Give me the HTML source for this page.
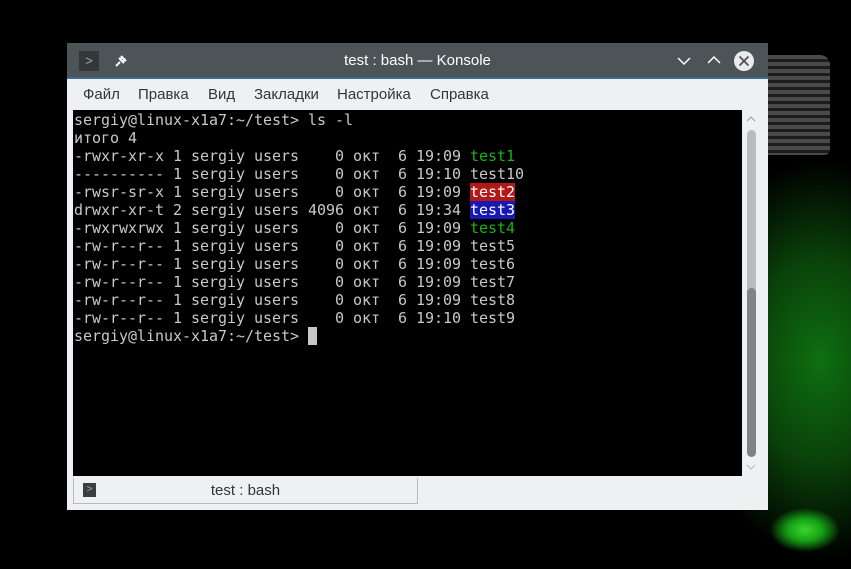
<!DOCTYPE html>
<html><head><meta charset="utf-8"><style>
*{margin:0;padding:0;box-sizing:border-box}
body{width:851px;height:569px;overflow:hidden;position:relative;background:#000;font-family:"Liberation Sans","DejaVu Sans",sans-serif}
.bg{position:absolute;inset:0;background:
radial-gradient(ellipse 35px 22px at 805px 530px,#3ad632 0%,#15a014 50%,transparent 100%),
radial-gradient(ellipse 130px 200px at 820px 360px,#0e7010 0%,#0a420a 50%,transparent 100%)}
.sock{position:absolute;left:768px;top:55px;width:62px;height:100px;background:repeating-linear-gradient(180deg,#4a4a4a 0 4px,#1c1c1c 4px 7px);border-radius:0 10px 6px 0}
.win{position:absolute;left:67px;top:43px;width:701px;height:467px;background:#eff0f1;border-radius:3px 3px 0 0}
.title{position:absolute;left:0;top:0;width:701px;height:36px;background:#4d5458;border-bottom:2px solid #3e6b8d;color:#fff;font-size:15px;text-align:center;line-height:36px}
.menu{position:absolute;top:36px;left:0;height:31px;font-size:15px;color:#31363b;line-height:31px}
.menu span{position:absolute;white-space:nowrap}
.term{position:absolute;left:6px;top:67px;width:669px;height:366px;background:#000;font-family:"DejaVu Sans Mono","Liberation Mono",monospace;font-size:15px;line-height:18px;color:#c8c8c8;padding:1px 0 0 1px;white-space:pre;letter-spacing:-0.03px}
.g{color:#18b218}.r{background:#b21818;color:#fff}.b{background:#1818b2;color:#fff}
.tab{position:absolute;left:6px;top:435px;width:345px;height:26px;border:1px solid #b8bbbe;border-top:none;background:#eff0f1;font-size:15px;color:#31363b;text-align:center;line-height:25px}
</style></head><body>
<div class="bg"></div>
<div class="sock"></div>
<div class="win">
 <div class="title">test : bash — Konsole
  <div style="position:absolute;left:12px;top:8px;width:20px;height:20px;background:#33383b;color:#aaa;font-size:13px;line-height:20px">&gt;</div>
  <svg style="position:absolute;left:46px;top:10px" width="16" height="16" viewBox="0 0 16 16"><path d="M3 13 L7 9 M6 5 L11 10 M8 3 L13 8 M9 4 L7 7 M12 7 L9 9" stroke="#fff" stroke-width="2" fill="none"/></svg>
  <svg style="position:absolute;left:609px;top:12px" width="16" height="12"><path d="M2 3 L8 9 L14 3" stroke="#fff" stroke-width="1.5" fill="none"/></svg>
  <svg style="position:absolute;left:639px;top:11px" width="16" height="12"><path d="M2 9 L8 3 L14 9" stroke="#fff" stroke-width="1.5" fill="none"/></svg>
  <svg style="position:absolute;left:666px;top:7px" width="22" height="22"><circle cx="11" cy="11" r="10" fill="#eaeaea"/><path d="M6.5 6.5 L15.5 15.5 M15.5 6.5 L6.5 15.5" stroke="#4d5458" stroke-width="1.8"/></svg>
 </div>
 <div class="menu"><span style="left:16px">Файл</span><span style="left:71px">Правка</span><span style="left:141px">Вид</span><span style="left:187px">Закладки</span><span style="left:270px">Настройка</span><span style="left:363px">Справка</span></div>
 <div class="term">sergiy@linux-x1a7:~/test&gt; ls -l
итого 4
-rwxr-xr-x 1 sergiy users    0 окт  6 19:09 <span class="g">test1</span>
---------- 1 sergiy users    0 окт  6 19:10 test10
-rwsr-sr-x 1 sergiy users    0 окт  6 19:09 <span class="r">test2</span>
drwxr-xr-t 2 sergiy users 4096 окт  6 19:34 <span class="b">test3</span>
-rwxrwxrwx 1 sergiy users    0 окт  6 19:09 <span class="g">test4</span>
-rw-r--r-- 1 sergiy users    0 окт  6 19:09 test5
-rw-r--r-- 1 sergiy users    0 окт  6 19:09 test6
-rw-r--r-- 1 sergiy users    0 окт  6 19:09 test7
-rw-r--r-- 1 sergiy users    0 окт  6 19:09 test8
-rw-r--r-- 1 sergiy users    0 окт  6 19:10 test9
sergiy@linux-x1a7:~/test&gt; <span style="background:#c8c8c8"> </span></div>
 <svg style="position:absolute;left:678px;top:72px" width="12" height="8"><path d="M2 6 L6 2 L10 6" stroke="#999" fill="none"/></svg>
 <div style="position:absolute;left:680px;top:87px;width:9px;height:327px;border-radius:5px;background:#b9bcbf"></div>
 <div style="position:absolute;left:680px;top:245px;width:9px;height:169px;border-radius:5px;background:#7f8385"></div>
 <svg style="position:absolute;left:678px;top:420px" width="12" height="8"><path d="M2 2 L6 6 L10 2" stroke="#bbb" fill="none"/></svg>
 <div class="tab">test : bash<div style="position:absolute;left:9px;top:5px;width:13px;height:14px;background:#3b3f42;color:#aaa;font-size:10px;line-height:14px">&gt;</div></div>
</div>
</body></html>
